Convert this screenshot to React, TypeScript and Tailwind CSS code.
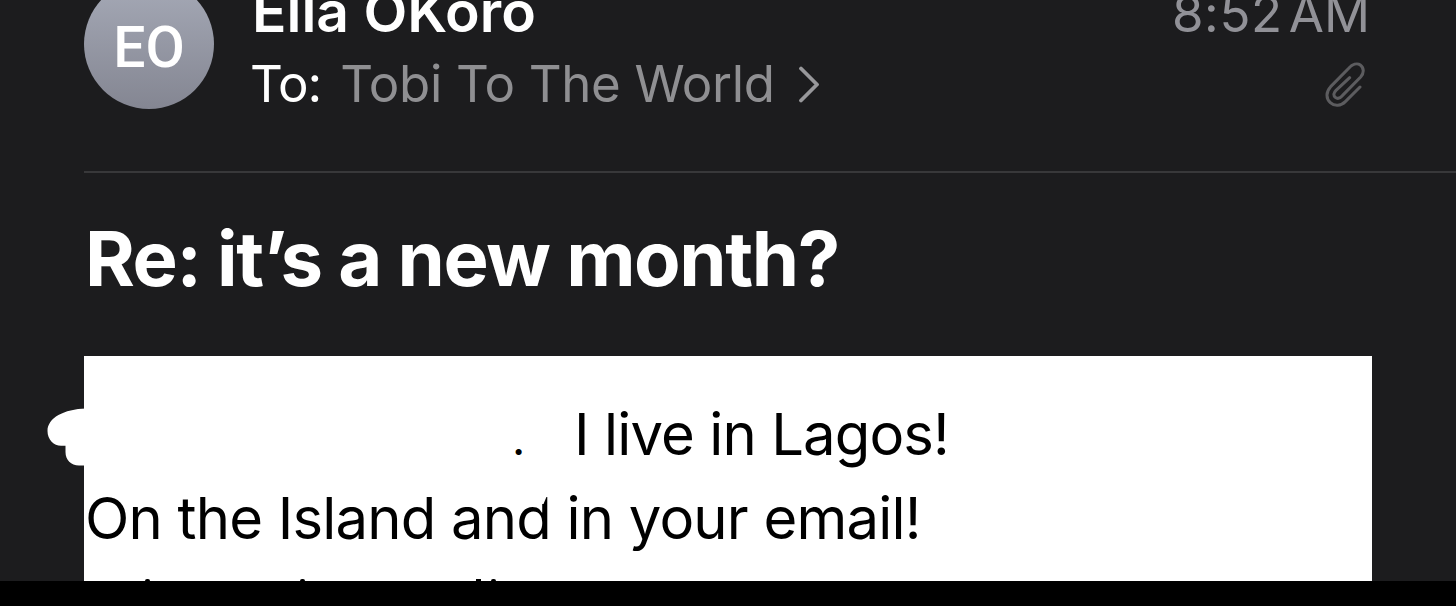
const HEADER_LINE = "leading-[70px] whitespace-nowrap";

function Avatar() {
  return (
    <div className="flex h-[130px] w-[130px] shrink-0 items-center justify-center rounded-full bg-linear-to-b from-[#a6aab7] to-[#848692]">
      <span className="pt-[7px] font-[Roboto,sans-serif] text-[57px] leading-none font-medium text-white">
        EO
      </span>
    </div>
  );
}

function ChevronIcon() {
  return (
    <svg className="h-[38px] w-[24px]" viewBox="0 0 24 38" fill="none" stroke="#98989b" strokeWidth={3.8} strokeLinecap="round" strokeLinejoin="round">
      <path d="M3 3.5 19 19.5 3 35.5" />
    </svg>
  );
}

function PaperclipIcon() {
  return (
    <svg className="h-[45px] w-[40px]" viewBox="525 185 120 135" fill="none" stroke="#5c5c5f" strokeWidth={9} strokeLinecap="round" strokeLinejoin="round">
      <path d="M630 260 586 304C573 317 554 319 541 307C527 294 528 274 542 259L597 203C607 192 621 187 631 194C643 203 642 219 632 230L577 286C570 294 562 296 556 291C549 285 551 277 558 270L599 232" />
    </svg>
  );
}

function MessageHeader() {
  return (
    <header className="flex h-[171px] overflow-hidden pr-[86px] pl-[84px]">
      <div className="-mt-[21px] flex w-full">
        <Avatar />
        <div className="ml-[36px] flex flex-col">
          <div className={`${HEADER_LINE} -mt-[2px] mb-[2px] ml-[2px] text-[57px] font-semibold text-white`}>
            Ella OKoro
          </div>
          <div className={`${HEADER_LINE} flex items-center text-[51px]`}>
            <span className="tracking-[-1px] text-white">To:</span>
            <span className="ml-[19px] tracking-[-0.35px] text-[#8f8f92]">Tobi To The World</span>
            <span className="ml-[23px]">
              <ChevronIcon />
            </span>
          </div>
        </div>
        <div className="ml-auto flex flex-col items-end">
          <div className={`${HEADER_LINE} flex gap-[6px] text-[51px] text-[#919197]`}>
            <span className="tracking-[0.6px]">8:52</span>
            <span>AM</span>
          </div>
          <div className="mt-[13px] mr-[5px]">
            <PaperclipIcon />
          </div>
        </div>
      </div>
    </header>
  );
}

// Brush strokes that hide the start of the first line
function Scribble() {
  return (
    <svg className="absolute top-[50px] -left-[40px] h-[64px] w-[42px]" viewBox="44 406 42 64" fill="#fff">
      <path d="M86 408.5C64 409 47.5 418 47.5 431C47.5 440 54 445.7 61 445.7H65.5V452C65.5 460 71 465.5 79 465.5H86Z" />
    </svg>
  );
}

function MessageBody() {
  return (
    <section className="relative ml-[84px] h-[225px] w-[1288px] bg-white text-[58px] leading-[84px] tracking-[-0.9px] whitespace-nowrap text-black">
      <Scribble />
      <div className="h-full overflow-hidden pt-[36px]">
        <p className="flex h-[84px] items-baseline">
          <span className="ml-[428px] w-[14px] text-[46px]">.</span>
          <span className="ml-[48px]">I live in Lagos!</span>
        </p>
        <p className="relative pl-[1px] tracking-[-0.8px]">
          On the Island and in your email!
          <svg className="absolute top-[16px] left-[456px] h-[12px] w-[10px]" viewBox="0 0 10 12" fill="#fff">
            <path d="M0 0H8.500L3.500 12H0Z" />
          </svg>
        </p>
        {/* tops of the letters of the next line, cut off by the screen edge */}
        <div className="mt-[19px] flex h-[2px]">
          <i className="ml-[61px] w-[5px] rounded-t-full bg-black" />
          <i className="ml-[150px] w-[5px] rounded-t-full bg-black" />
          <i className="ml-[171px] w-[5px] bg-black" />
          <i className="ml-[10px] w-[5px] rounded-t-full bg-black" />
        </div>
      </div>
    </section>
  );
}

export default function App() {
  return (
    <main className="h-[606px] w-[1456px] overflow-hidden bg-black font-[Inter,sans-serif]">
      <div className="h-[581px] bg-[#1c1c1e]">
        <MessageHeader />
        <div className="ml-[84px] h-[2px] bg-[#38383a]" />
        <h1 className="h-[183px] pt-[35px] pl-[85px] text-[76px] leading-[100px] font-bold tracking-[-1.4px] whitespace-nowrap text-white">
          Re: it’s a new month?
        </h1>
        <MessageBody />
      </div>
    </main>
  );
}
